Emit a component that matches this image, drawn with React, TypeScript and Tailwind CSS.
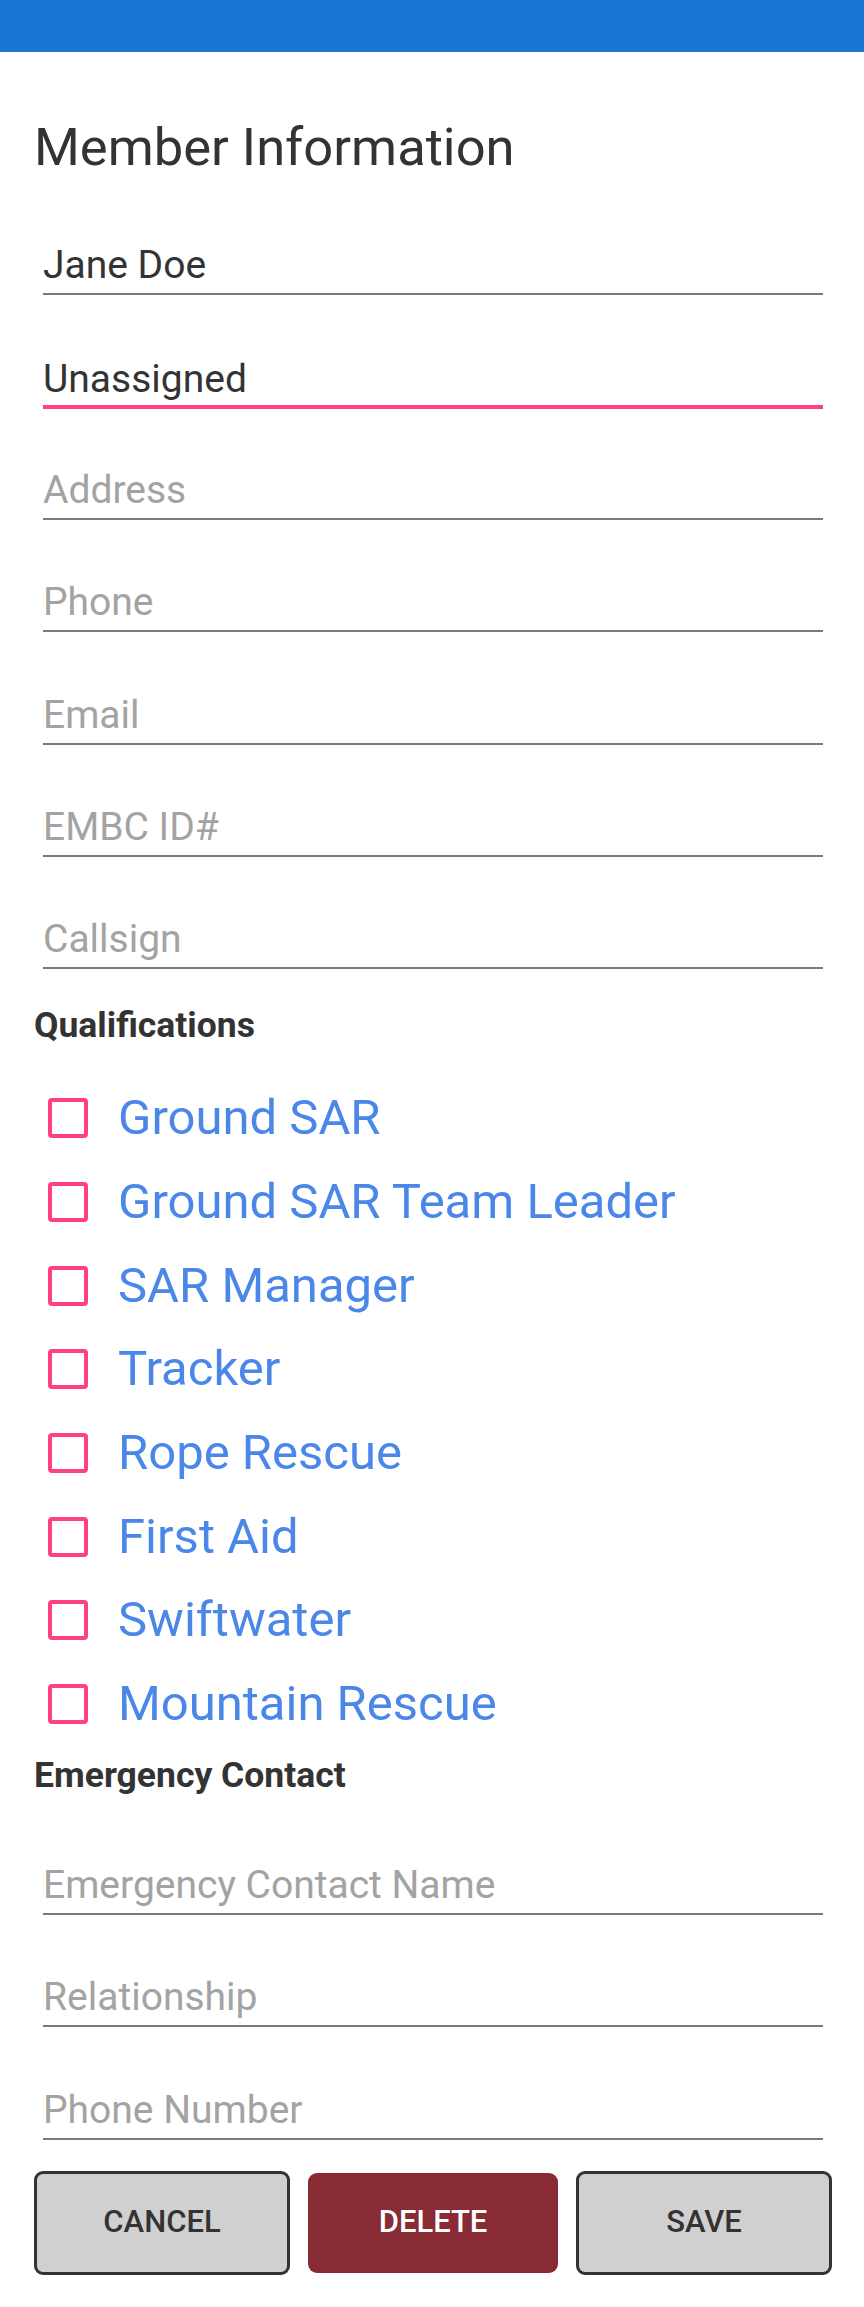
import React from "react";

type F = { label: string; value?: boolean; focused?: boolean; h?: string };

const fieldsTop: F[] = [
  { label: "Jane Doe", value: true },
  { label: "Unassigned", value: true, focused: true, h: "h-[114.4px]" },
  { label: "Address", h: "h-[110.4px]" },
  { label: "Phone" },
  { label: "Email" },
  { label: "EMBC ID#" },
  { label: "Callsign" },
];

const quals = [
  "Ground SAR",
  "Ground SAR Team Leader",
  "SAR Manager",
  "Tracker",
  "Rope Rescue",
  "First Aid",
  "Swiftwater",
  "Mountain Rescue",
];

const fieldsBottom = ["Emergency Contact Name", "Relationship", "Phone Number"];

function Field({ label, value, focused, h }: F) {
  return (
    <div className={(h ?? "h-[112.4px]") + " flex flex-col justify-end ml-[43px] mr-[41px]"}>
      <div
        className={
          focused
            ? "border-b-[4px] border-[#ff4081] pb-[4px] text-[39px] leading-[44px]"
            : "border-b-2 border-[#7a7a7a] pb-[6px] text-[39px] leading-[44px]"
        }
      >
        <span className={value ? "text-[#333333]" : "text-[#a3a3a3]"}>{label}</span>
      </div>
    </div>
  );
}

export default function App() {
  return (
    <div
      className="w-[864px] h-[2307px] bg-white overflow-hidden"
      style={{ fontFamily: "Roboto, 'Noto Sans', sans-serif" }}
    >
      <div className="h-[52px] bg-[#1976d2]" />
      <div className="pt-[65px] pl-[34px] text-[52.5px] leading-[60px] text-[#333333]">Member Information</div>
      <div className="h-[5.6px]" />
      {fieldsTop.map((f) => (
        <Field key={f.label} {...f} />
      ))}
      <div className="mt-[36px] pl-[34px] text-[35.5px] leading-[40px] font-bold text-[#333333]">Qualifications</div>
      <div className="mt-[31px] flex flex-col">
        {quals.map((q) => (
          <div key={q} className="h-[83.7px] flex items-center">
            <div className="ml-[48px] w-[40px] h-[40px] rounded-[4px] border-[4px] border-[#ff4081] shrink-0" />
            <span className="ml-[30px] text-[49px] leading-[56px] text-[#4a87e8]">{q}</span>
          </div>
        ))}
      </div>
      <div className="mt-[9px] pl-[34px] text-[35.5px] leading-[40px] font-bold text-[#333333]">Emergency Contact</div>
      <div className="h-[7.6px]" />
      {fieldsBottom.map((f) => (
        <Field key={f} label={f} />
      ))}
      <div className="mt-[31px] flex gap-[16px] pl-[34px] pr-[32px]">
        <button className="flex-1 h-[104px] rounded-[9px] border-[3px] border-[#333333] bg-[#d0d0d0] text-[31px] font-medium text-[#333333]">
          CANCEL
        </button>
        <button className="flex-1 h-[100px] mt-[2px] mx-[2px] rounded-[9px] bg-[#882b34] text-[31px] font-medium text-white">
          DELETE
        </button>
        <button className="flex-1 h-[104px] rounded-[9px] border-[3px] border-[#333333] bg-[#d0d0d0] text-[31px] font-medium text-[#333333]">
          SAVE
        </button>
      </div>
    </div>
  );
}
